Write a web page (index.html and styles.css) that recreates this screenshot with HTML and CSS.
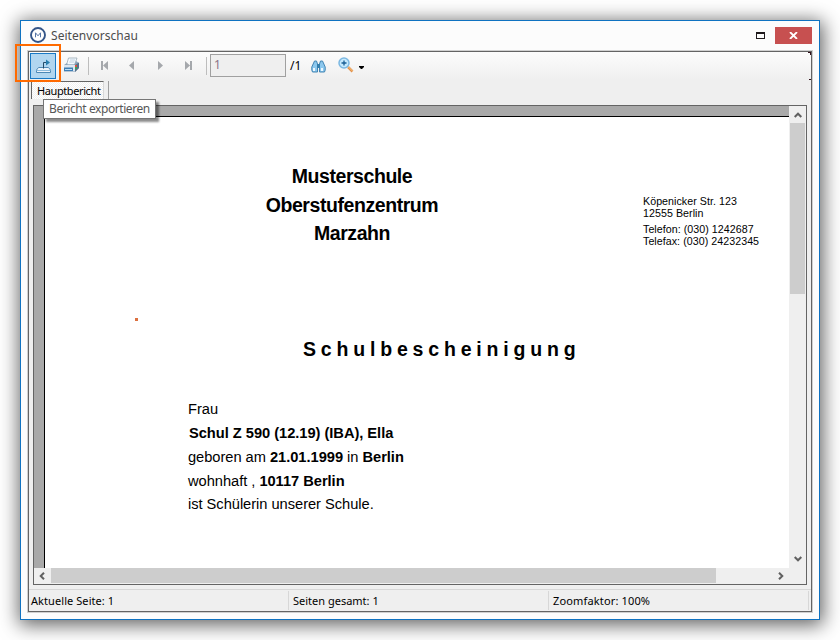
FILE: index.html
```html
<!DOCTYPE html>
<html lang="de">
<head>
<meta charset="utf-8">
<title>Seitenvorschau</title>
<link rel="stylesheet" href="styles.css">
</head>
<body>
<main class="window">
  <header class="titlebar">
    <svg class="logo" width="16" height="16" viewBox="0 0 16 16"><circle cx="8" cy="8" r="7" fill="#fff" stroke="#345588" stroke-width="1.9"/><path d="M5.5 10.3V5.8L8 8.8l2.500-3v4.500" fill="none" stroke="#5474a5" stroke-width="1"/></svg>
    <h1 class="title">Seitenvorschau</h1>
    <svg class="maximize" width="9" height="7" viewBox="0 0 9 7"><path d="M0 0h9v7H0zM1 2v4h7V2z" fill="#1f1a1c" fill-rule="evenodd"/></svg>
    <button class="close" aria-label="Schließen"><svg width="9" height="7" viewBox="0 0 9 7"><path d="M1 0l7 7M8 0L1 7" stroke="#fff" stroke-width="1.8"/></svg></button>
  </header>
  <section class="client">
    <nav class="toolbar">
      <button class="tool export" aria-label="Bericht exportieren">
        <svg width="17" height="16" viewBox="0 0 17 16"><path d="M3.500 9.500h10l2 2.500v2.500h-14V12z" fill="#eef5fc" stroke="#4d88b5"/><path d="M1.500 12.500h14" stroke="#8dbbdc"/><path d="M8.500 10.500v-6h3" fill="none" stroke="#244b68"/><path d="M11 1.500l4 3-4 3z" fill="#287eae"/></svg>
      </button>
      <svg class="print" width="17" height="16" viewBox="0 0 17 16"><path d="M5.500 1h8.500l-2.500 7h-8z" fill="#f4faff" stroke="#9ba9b5" stroke-width=".8"/><path d="M7 3h5M6.300 5h5" stroke="#b3c5d6" stroke-width=".8"/><path d="M1 8l3-2 .5 1.500h7L13 4l3 2v5l-4 4H1z" fill="#8ba4ba"/><path d="M1 8h11v6.500H1z" fill="#dce6f0"/><path d="M1 10.500h9V14H1z" fill="#3e7fb5"/><path d="M2 12.500h7" stroke="#b9dbf3"/><path d="M12 8l4-2.500v5.500l-4 4z" fill="#56718a"/><path d="M12 8h2v2h-2z" fill="#dd513e"/><path d="M12 10h2v2h-2z" fill="#38a35c"/></svg>
      <i class="rule first"></i>
      <svg class="nav nav-first" width="8" height="9" viewBox="0 0 8 9"><path d="M0 0h2v9H0zM7 0v9L2 4.500z" fill="#a5a8ac"/></svg>
      <svg class="nav nav-prev" width="8" height="9" viewBox="0 0 8 9"><path d="M6 0v9L1 4.500z" fill="#a5a8ac"/></svg>
      <svg class="nav nav-next" width="8" height="9" viewBox="0 0 8 9"><path d="M1 0v9l5-4.500z" fill="#a5a8ac"/></svg>
      <svg class="nav nav-last" width="8" height="9" viewBox="0 0 8 9"><path d="M0 0v9l5-4.500zM5 0h2v9H5z" fill="#a5a8ac"/></svg>
      <i class="rule second"></i>
      <span class="page-field">1</span>
      <span class="page-total">/1</span>
      <svg class="find" width="15" height="13" viewBox="0 0 15 13"><path d="M3.500 1h2L6.500 4v8h-5L.8 10V7z" fill="#8cc8ee" stroke="#4385b3"/><path d="M11.500 1h-2l-1 3v8h5l.7-2V7z" fill="#8cc8ee" stroke="#4385b3"/><path d="M6 4h3v4H6z" fill="#357fae"/><path d="M2 8h2v3H2zM10 8h2v3h-2z" fill="#edf8ff"/></svg>
      <svg class="zoom" width="16" height="16" viewBox="0 0 16 16"><path d="M10 10l4.500 4.500" stroke="#e1914c" stroke-width="2.500"/><path d="M10 9.500l4.500 4.500" stroke="#ffd189" stroke-width=".8"/><circle cx="6" cy="6" r="5" fill="#c5e9fd" stroke="#7cb8e2" stroke-width="1.500"/><path d="M3.500 6h5M6 3.500v5" stroke="#185d94" stroke-width="1.300"/></svg>
      <svg class="caret" width="5" height="3" viewBox="0 0 5 3"><path d="M0 0h5v1L3 3H2L0 1z"/></svg>
    </nav>
    <div class="tabs"><span class="tab">Hauptbericht</span><i class="tab-edge"></i></div>
    <section class="viewer">
      <div class="canvas">
        <article class="page">
          <div class="letterhead">
            <h2 class="school">Musterschule<br>Oberstufenzentrum<br>Marzahn</h2>
            <address class="contact">
              <p>Köpenicker Str. 123</p><p>12555 Berlin</p>
              <p class="phone">Telefon: (030) 1242687</p><p>Telefax: (030) 24232345</p>
            </address>
          </div>
          <i class="mark"></i>
          <h3 class="doc-title">S c h u l b e s c h e i n i g u n g</h3>
          <div class="body">
            <p>Frau</p>
            <p class="name"><b>Schul Z 590 (12.19) (IBA), Ella</b></p>
            <p>geboren am <b>21.01.1999</b> in <b>Berlin</b></p>
            <p>wohnhaft , <b>10117 Berlin</b></p>
            <p class="last">ist Schülerin unserer Schule.</p>
          </div>
        </article>
      </div>
      <div class="vscroll">
        <svg width="8" height="6" viewBox="0 0 8 6"><path d="M.7 5L4 1.700 7.300 5" fill="none" stroke="#606060" stroke-width="2"/></svg>
        <i class="vthumb"></i>
        <svg class="down" width="8" height="6" viewBox="0 0 8 6"><path d="M.7 1L4 4.300 7.300 1" fill="none" stroke="#606060" stroke-width="2"/></svg>
      </div>
      <div class="hscroll">
        <svg width="6" height="8" viewBox="0 0 6 8"><path d="M5 .7L1.700 4 5 7.300" fill="none" stroke="#606060" stroke-width="2"/></svg>
        <i class="hthumb"></i>
        <svg class="right" width="6" height="8" viewBox="0 0 6 8"><path d="M1 .7L4.300 4 1 7.300" fill="none" stroke="#606060" stroke-width="2"/></svg>
      </div>
    </section>
    <footer class="status"><span class="current">Aktuelle Seite: 1</span><span class="total">Seiten gesamt: 1</span><span class="factor">Zoomfaktor: 100%</span></footer>
    <i class="corners"></i>
  </section>
  <div class="highlight"></div>
  <div class="tooltip">Bericht exportieren</div>
</main>
</body>
</html>
```
FILE: styles.css
```css
* { box-sizing: border-box; }
body { margin: 0; background: #fff; overflow: hidden; font-family: "Noto Sans", "Open Sans", sans-serif; color: #000; }
h1, h2, h3, p { margin: 0; }
svg { display: block; flex: none; }
i { display: block; flex: none; }
button { padding: 0; border: 0; font: inherit; }

.window { position: relative; width: 800px; height: 600px; margin: 20px; background: #fcfcfc; border: 1px solid #0f72c1; box-shadow: 1px 3px 18px 2px rgba(0, 0, 0, .62); }
.titlebar { height: 29px; display: flex; align-items: center; padding: 0 7px 0 9px; }
.logo { margin-top: -1px; }
.title { margin-left: 5px; flex: 1; font-size: 12px; font-weight: 400; line-height: 20px; letter-spacing: .05px; color: #4c4c4c; }
.maximize { margin-right: 10px; }
.close { width: 37px; height: 17px; display: grid; place-items: center; background: #c75050; }

.client { position: relative; height: 563px; margin: 0 6px; padding: 1px; background: #efefef; border: 1px solid #d0d0d0; display: flex; flex-direction: column; box-shadow: inset 0 0 0 1px #646464; }
.toolbar { height: 28px; display: flex; align-items: center; padding-left: 1px; background: linear-gradient(#fcfcfc, #efefef); }
.tool { width: 26px; height: 26px; display: grid; place-items: center; background: #b1d6f0; border: 1px solid #1979c5; }
.print { margin: -2px 0 0 7px; }
.rule { width: 1px; height: 18px; background: #bdbdbd; }
.first { margin-left: 8px; }
.nav { margin-top: -1px; }
.nav-first { margin-left: 12px; }
.nav-prev { margin-left: 19px; }
.nav-next { margin-left: 21px; }
.nav-last { margin-left: 20px; }
.second { margin-left: 13px; }
.page-field { width: 76px; height: 23px; margin: -1px 0 0 3px; padding-left: 3px; border: 1px solid #a0a0a0; background: #efefef; color: #8c7487; font-size: 12px; line-height: 20px; }
.page-total { width: 22px; margin-left: 4px; font-size: 12px; line-height: 20px; }
.find { margin-left: -1px; }
.zoom { margin: -2px 0 0 12px; }
.caret { margin: 2px 0 0 5px; }

.tabs { height: 25px; display: flex; padding: 1px 0 6px 2px; }
.tab { width: 73px; padding-left: 5px; border: 1px solid #646464; border-right-color: #d8d8d8; border-width: 1px 1px 0; background: repeating-conic-gradient(#fff 0 25%, #f0f0f0 0 50%) 0 0 / 2px 2px; font-size: 11px; line-height: 18px; letter-spacing: -.4px; white-space: nowrap; }
.tab-edge { width: 1px; margin-left: 4px; background: #a0a0a0; }

.viewer { height: 480px; margin: 0 4px; border: 1px solid #646464; display: grid; grid-template: 462px 16px / 756px 16px; }
.canvas { padding: 10px 0 0 10px; background: #a9a9a9; border-right: 1px solid #efefef; }
.page { height: 452px; background: #fff; border: solid #000; border-width: 1px 0 0 1px; font-family: "Liberation Sans", Arial, sans-serif; overflow: hidden; }
.vscroll { background: #efefef; display: flex; flex-direction: column; align-items: center; padding: 6px 1px 6px 0; }
.vthumb { width: 15px; height: 171px; margin-top: 5px; background: #cdcdcd; }
.down { margin-top: auto; }
.hscroll { grid-column: 1 / 3; background: #efefef; display: flex; align-items: center; padding: 0 22px 1px 5px; }
.hthumb { width: 665px; height: 15px; margin-left: 6px; background: #cdcdcd; }
.right { margin-left: auto; }

.letterhead { display: grid; grid-template-columns: 598px 1fr; padding-top: 45px; height: 201px; }
.school { width: 310px; margin-left: 152px; text-align: center; font-size: 19.5px; line-height: 28.5px; letter-spacing: -.43px; }
.contact { margin-top: 33px; font-size: 10.67px; line-height: 12px; font-style: normal; letter-spacing: .05px; white-space: nowrap; }
.phone { margin-top: 4px; }
.mark { width: 3px; height: 3px; margin-left: 90px; background: #dc7040; }
.doc-title { margin: 16px 0 0 258px; font-size: 19.5px; line-height: 24px; letter-spacing: -.3px; white-space: nowrap; }
.body { margin: 36px 0 0 143px; font-size: 14.67px; line-height: 24px; letter-spacing: -.03px; white-space: nowrap; }
.name { padding-left: 1px; }
.last { margin-top: -1px; }

.status { height: 22px; margin-top: 4px; border-top: 1px solid #d7d7d7; display: grid; grid-template-columns: 260px 260px 260px; font-size: 11px; line-height: 20px; }
.status span { height: 19px; margin-top: 1px; border-right: 1px solid #d7d7d7; padding-left: 4px; }
.status .current { padding-left: 2px; letter-spacing: .07px; }
.status .factor { letter-spacing: .15px; }
.corners { position: absolute; top: 1px; right: 1px; width: 3px; height: 28px; background: linear-gradient(#300f18, #300f18) 0 0 / 3px 1px no-repeat, linear-gradient(#300f18, #300f18) 2px 0 / 1px 3px no-repeat, linear-gradient(#300f18, #300f18) 1px 27px / 2px 1px no-repeat; }
.highlight { position: absolute; left: -6px; top: 23px; width: 46px; height: 38px; border: 2px solid #ff6a00; }
.tooltip { position: absolute; left: 22px; top: 78px; width: 113px; height: 20px; padding-left: 5px; border: 1px solid #767676; background: #fff; box-shadow: 3px 3px 2px rgba(0, 0, 0, .45); color: #575757; font-size: 12px; line-height: 18px; letter-spacing: -.42px; white-space: nowrap; }
```
